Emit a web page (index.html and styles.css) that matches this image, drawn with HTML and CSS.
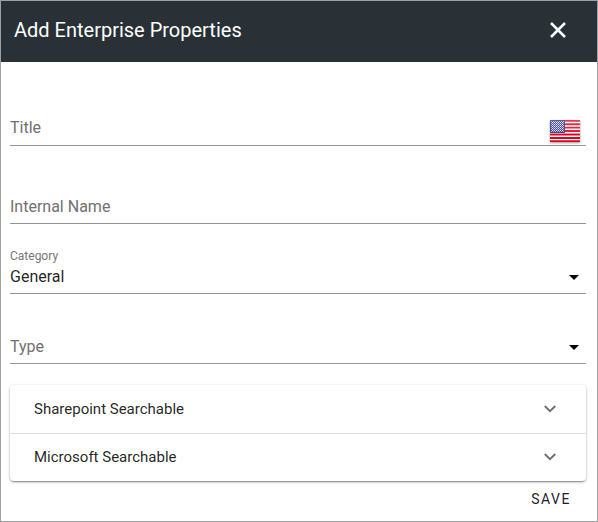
FILE: index.html
```html
<!DOCTYPE html>
<html lang="en">
<head>
<meta charset="utf-8">
<title>Add Enterprise Properties</title>
<link rel="stylesheet" href="styles.css">
</head>
<body>
<main class="dialog">
  <header class="header">
    <h1 class="heading">Add Enterprise Properties</h1>
    <svg class="close" width="16" height="16" viewBox="0 0 16 16"><path d="M1 1l14 14M15 1l-14 14"/></svg>
  </header>
  <section class="content">
    <div class="field field-title">
      <span class="label">Title</span>
      <svg class="flag" width="30" height="22" viewBox="0 0 30 22">
        <defs>
          <pattern id="stars" width="2" height="2" patternUnits="userSpaceOnUse">
            <rect width="2" height="2" fill="#2b3088"/><rect width="1" height="1" fill="#e4e6f6"/><rect x="1" y="1" width="1" height="1" fill="#a8aed8"/>
          </pattern>
          <linearGradient id="gloss" x1="0" y1="0" x2="0" y2="1"><stop offset="0" stop-color="#fff" stop-opacity=".22"/><stop offset=".62" stop-color="#fff" stop-opacity=".1"/><stop offset=".63" stop-color="#fff" stop-opacity="0"/></linearGradient>
        </defs>
        <rect width="30" height="22" fill="#fff"/>
        <path d="M0 .85h30M0 4.23h30M0 7.61h30M0 11h30M0 14.5h30M0 18h30M0 21.15h30" stroke="#e0001e" stroke-width="1.8"/>
        <rect width="15" height="13" fill="#2b3088"/>
        <rect x="1" y="1" width="13" height="11" fill="url(#stars)"/>
        <rect width="30" height="22" fill="url(#gloss)"/>
      </svg>
    </div>
    <div class="field field-name"><span class="label label-low">Internal Name</span></div>
    <div class="field">
      <div class="stack"><span class="caption">Category</span><span class="value">General</span></div>
      <svg class="arrow" width="10" height="5" viewBox="0 0 10 5"><path d="M0 0h10L5 5z"/></svg>
    </div>
    <div class="field">
      <span class="label label-low">Type</span>
      <svg class="arrow" width="10" height="5" viewBox="0 0 10 5"><path d="M0 0h10L5 5z"/></svg>
    </div>
    <div class="panels">
      <div class="panel"><span>Sharepoint Searchable</span><svg class="chevron" width="12" height="8" viewBox="0 0 12 8"><path d="M.8 1L6 6.2 11.2 1"/></svg></div>
      <div class="panel"><span>Microsoft Searchable</span><svg class="chevron" width="12" height="8" viewBox="0 0 12 8"><path d="M.8 1L6 6.2 11.2 1"/></svg></div>
    </div>
    <footer class="actions"><button class="save">SAVE</button></footer>
  </section>
</main>
</body>
</html>
```
FILE: styles.css
```css
* { box-sizing: border-box; }
body { margin: 0; font-family: Roboto, "Liberation Sans", sans-serif; background: #fff; }
.dialog { width: 598px; height: 522px; border: 1px solid #a0a0a0; overflow: hidden; }
.header {
  display: flex; align-items: center; justify-content: space-between;
  height: 61px; padding: 0 31px 3px 13px; background: #293136;
}
.heading { margin: 0; font-size: 20px; font-weight: 400; line-height: 28px; color: #fff; }
.close { stroke: #fff; stroke-width: 2.5; fill: none; }
.content { padding: 0 11px 0 9px; }
.field {
  display: flex; align-items: flex-end; justify-content: space-between;
  height: 70px; border-bottom: 1px solid #949494;
}
.field-title { height: 84px; }
.field-name { height: 78px; }
.label, .value { font-size: 16px; line-height: 20px; }
.label { padding-bottom: 7px; color: #707070; }
.label-low { padding-bottom: 6px; }
.value { padding-bottom: 6px; color: rgba(0, 0, 0, .87); }
.stack { display: flex; flex-direction: column; }
.caption { padding-bottom: 1px; font-size: 12px; line-height: 20px; color: #777; }
.flag { margin: 0 6px 3px 0; filter: drop-shadow(0 1px 1px rgba(0, 0, 0, .4)); }
.arrow { margin: 0 7px 13px 0; fill: #000; }
.panels {
  margin-top: 21px; border-radius: 4px; font-size: 15px; color: rgba(0, 0, 0, .87);
  box-shadow: 0 3px 1px -2px rgba(0, 0, 0, .2), 0 1px 2px rgba(0, 0, 0, .28), 0 1px 4px rgba(0, 0, 0, .12);
}
.panel { display: flex; align-items: center; justify-content: space-between; height: 48px; padding: 0 30px 0 24px; }
.panel + .panel { padding-bottom: 1px; border-top: 1px solid #dedede; }
.chevron { fill: none; stroke: #6c6c76; stroke-width: 1.9; }
.actions { display: flex; justify-content: flex-end; padding: 8px 15px 0 0; }
.save {
  padding: 0; border: 0; background: none; color: rgba(0, 0, 0, .9);
  font: 400 14px/20px Roboto, sans-serif; letter-spacing: 1.5px;
}
```
